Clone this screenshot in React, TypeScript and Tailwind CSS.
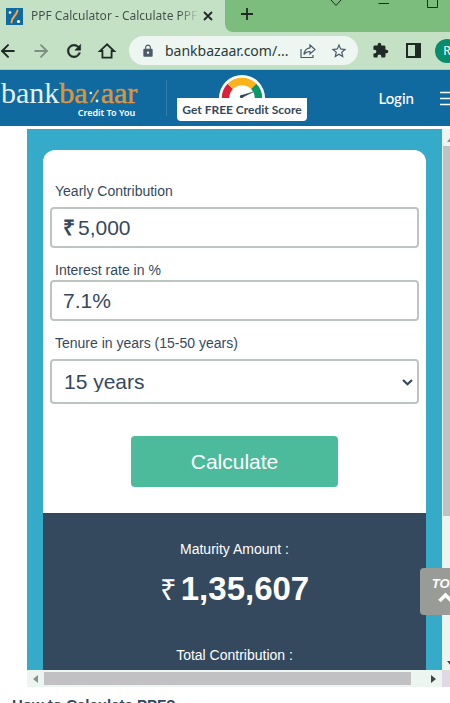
import React, { useState } from 'react';
import { MdLock, MdStarBorder } from 'react-icons/md';
import { ArrowLeft, ArrowRight } from 'lucide-react';

const TENURES = Array.from({ length: 36 }, (_, i) => i + 15);

function TabStrip() {
  return (
    <div className="flex h-8 bg-[#7cbc7c]">
      <div className="flex h-8 w-1/2 items-center bg-[#c5e1c5] pl-[6px] pr-3">
        <svg className="h-[17px] w-[17px] shrink-0" viewBox="0 0 17 17" aria-hidden="true">
          <rect width="17" height="17" fill="#0f6a9f" />
          <path d="M11.5 2.5 Q11 5 8.5 8 Q5.5 11.5 5.5 14.5" fill="none" stroke="#f3a24a" strokeWidth="2" strokeLinecap="round" />
          <circle cx="4" cy="4.5" r="1.3" fill="#fff" />
          <circle cx="12.5" cy="13.5" r="1.6" fill="#fff" />
        </svg>
        <span className="ml-2 min-w-0 flex-1 overflow-hidden whitespace-nowrap bg-gradient-to-r from-[#3f4f49] from-88% to-transparent bg-clip-text font-['Noto_Sans',sans-serif] text-[12px] leading-5 text-transparent">
          PPF Calculator - Calculate PPF
        </span>
        <button type="button" aria-label="Close tab" className="ml-1 shrink-0 text-[#1f2a24]">
          <svg className="h-[10px] w-[10px]" viewBox="0 0 10 10" stroke="currentColor" strokeWidth="1.8">
            <path d="M1 1 L9 9 M9 1 L1 9" />
          </svg>
        </button>
      </div>
      <div className="flex h-8 flex-1 items-start bg-[#c5e1c5]">
        <div className="flex h-8 flex-1 items-start rounded-bl-lg bg-[#7cbc7c] pl-4">
          <button type="button" aria-label="New tab" className="mt-2 text-[#1f2a24]">
            <svg className="h-3 w-3" viewBox="0 0 12 12" stroke="currentColor" strokeWidth="1.8">
              <path d="M6 0 V12 M0 6 H12" />
            </svg>
          </button>
          <div className="ml-auto flex items-start gap-9 pr-3 text-[#1f2a24]">
            <button type="button" aria-label="Search tabs">
              <svg className="h-[10px] w-3" viewBox="0 0 12 10" fill="none" stroke="currentColor">
                <path d="M1 0 L6 5.5 L11 0" />
              </svg>
            </button>
            <button type="button" aria-label="Minimize">
              <svg className="h-[10px] w-3" viewBox="0 0 12 10" fill="none" stroke="currentColor">
                <path d="M0.5 3.5 H11" />
              </svg>
            </button>
            <button type="button" aria-label="Maximize">
              <svg className="h-[10px] w-3" viewBox="0 0 12 10" fill="none" stroke="currentColor">
                <path d="M1.5 -2 V7.5 H11.5 V-2" />
              </svg>
            </button>
          </div>
        </div>
      </div>
    </div>
  );
}

function Toolbar() {
  return (
    <div className="flex items-center border-b border-[#b3cbb3] bg-[#c5e1c5] pb-1 pt-1 text-[#1f2a24]">
      <div className="flex shrink-0 items-center gap-[13px] pr-3">
        <button type="button" aria-label="Back" className="-ml-[2px]">
          <ArrowLeft className="h-5 w-5" strokeWidth={2.4} />
        </button>
        <button type="button" aria-label="Forward" className="text-[#7d8f82]">
          <ArrowRight className="h-5 w-5" strokeWidth={2.2} />
        </button>
        <button type="button" aria-label="Reload">
          <svg className="h-5 w-5" viewBox="0 0 24 24" fill="currentColor" stroke="currentColor" strokeWidth="0.6">
            <path d="M17.65 6.35A7.958 7.958 0 0 0 12 4c-4.42 0-7.99 3.58-7.99 8s3.57 8 7.99 8c3.73 0 6.84-2.55 7.73-6h-2.08A5.99 5.99 0 0 1 12 18c-3.31 0-6-2.69-6-6s2.69-6 6-6c1.66 0 3.14.69 4.22 1.78L13 11h7V4l-2.35 2.35z" />
          </svg>
        </button>
        <button type="button" aria-label="Home">
          <svg className="h-5 w-5" viewBox="0 0 24 24" fill="none" stroke="currentColor" strokeWidth="2.2">
            <path d="M12 4 L3.5 12 H6.5 V20 H17.5 V12 H20.500 Z" />
          </svg>
        </button>
      </div>
      <div className="flex h-[29px] min-w-0 flex-1 items-center rounded-full bg-[#edf6f1] pl-3 pr-[10px] text-[#4b5a68]">
        <MdLock className="h-[14px] w-[14px] shrink-0" />
        <input
          type="text"
          aria-label="Address"
          defaultValue="bankbazaar.com/..."
          className="ml-[10px] w-full min-w-0 bg-transparent font-['Noto_Sans',sans-serif] text-[14px] text-[#2c3a38] outline-none"
        />
        <button type="button" aria-label="Share" className="shrink-0">
          <svg className="h-4 w-4" viewBox="0 0 16 16" fill="none" stroke="currentColor" strokeWidth="1.2">
            <path d="M1 6 V14.5 H13 V12" />
            <path d="M10 2 L15 6.5 L10 11 V8.5 Q6 8.5 4 11.5 Q4.5 5.5 10 4.8 Z" />
          </svg>
        </button>
        <button type="button" aria-label="Bookmark" className="ml-[14px] shrink-0">
          <MdStarBorder className="h-[18px] w-[18px]" />
        </button>
      </div>
      <div className="-mr-[9px] ml-[14px] flex shrink-0 items-center">
        <button type="button" aria-label="Extensions">
          <svg className="h-[17px] w-[17px]" viewBox="0 0 24 24" fill="currentColor">
            <path d="M20.5 11H19V7a2 2 0 0 0-2-2h-4V3.5a2.5 2.5 0 0 0-5 0V5H4a2 2 0 0 0-2 2v3.8h1.5a2.7 2.7 0 0 1 0 5.4H2V20a2 2 0 0 0 2 2h3.8v-1.500a2.7 2.7 0 0 1 5.4 0V22H17a2 2 0 0 0 2-2v-4h1.500a2.500 2.500 0 0 0 0-5z" />
          </svg>
        </button>
        <button type="button" aria-label="Side panel" className="ml-[17px]">
          <svg className="h-[15px] w-[15px]" viewBox="0 0 15 15">
            <rect x="1" y="1" width="13" height="13" fill="none" stroke="currentColor" strokeWidth="2" />
            <rect x="9" y="1" width="5" height="13" fill="currentColor" />
          </svg>
        </button>
        <button
          type="button"
          aria-label="Profile"
          className="ml-[14px] h-6 w-6 rounded-full bg-[#078c6c] text-center font-['Noto_Sans',sans-serif] text-[12px] leading-6 text-white"
        >
          R
        </button>
      </div>
    </div>
  );
}

function SiteHeader() {
  return (
    <header className="flex h-14 items-center bg-[#106a9f] font-[Lato,sans-serif] text-white">
      <a href="#" className="flex shrink-0 flex-col pl-px pt-[2px]">
        <span className="flex items-baseline font-['Liberation_Serif',serif] text-[30px] leading-7">
          <span className="text-[#e4f0f7]">bank</span>
          <span className="text-[#dc9440] [-webkit-text-stroke:0.5px_#dc9440]">ba</span>
          <svg className="h-[14px] w-[13px]" viewBox="0 0 13 14" role="img" aria-label="z">
            <path d="M10.5 1 Q9 3 6.5 7 Q4 11 3 13.5" fill="none" stroke="#dc9440" strokeWidth="2" />
            <circle cx="2.8" cy="4" r="1.3" fill="#e4f0f7" />
            <circle cx="9" cy="12" r="1.4" fill="#e4f0f7" />
          </svg>
          <span className="text-[#dc9440] [-webkit-text-stroke:0.5px_#dc9440]">aar</span>
        </span>
        <span className="self-end pr-[2px] font-['Noto_Sans',sans-serif] text-[9px] font-semibold leading-3">Credit To You</span>
      </a>
      <div className="ml-[29px] h-9 w-px shrink-0 bg-[#3a7ca8]" />
      <a href="#" className="ml-[10px] flex shrink-0 flex-col items-center">
        <svg className="h-[23px] w-[46px]" viewBox="0 0 46 23" aria-hidden="true">
          <path d="M0 23 A23 23 0 0 1 46 23 Z" fill="#fff" />
          <path d="M6.5 23 A16.5 16.5 0 0 1 11.3 11.3" fill="none" stroke="#e01e37" strokeWidth="7.5" />
          <path d="M11.3 11.3 A16.5 16.5 0 0 1 34.7 11.3" fill="none" stroke="#fbb21b" strokeWidth="7.5" />
          <path d="M34.7 11.3 A16.5 16.5 0 0 1 39.5 23" fill="none" stroke="#0b9766" strokeWidth="7.5" />
          <path d="M22 20.5 L34 17 L23 22.5 Z" fill="#2f4358" stroke="#2f4358" strokeWidth="0.5" />
          <circle cx="22.5" cy="21.5" r="1.6" fill="#2f4358" />
        </svg>
        <span className="rounded-b bg-white px-[5px] text-[12px] font-bold leading-[23px] text-[#34495e]">
          Get FREE Credit Score
        </span>
      </a>
      <a href="#" className="ml-auto text-[15px] font-medium leading-5">Login</a>
      <button type="button" aria-label="Menu" className="-mr-[7px] ml-[26px] shrink-0">
        <svg className="h-[15px] w-[17px]" viewBox="0 0 17 15" stroke="#fff" strokeWidth="1.3">
          <path d="M0 1.5 H17 M0 7.5 H17 M0 13.5 H17" />
        </svg>
      </button>
    </header>
  );
}

function Calculator() {
  const [amount, setAmount] = useState('5,000');
  const [rate, setRate] = useState('7.1%');
  const [years, setYears] = useState(15);

  return (
    <div className="min-w-0 flex-1 bg-[#36aac9] px-4 pt-[21px] text-[14px] leading-5 text-[#34495e]">
      <form
        className="rounded-t-xl bg-white px-[7px] pb-[26px] pt-[31px]"
        onSubmit={e => e.preventDefault()}
      >
        <label htmlFor="amount" className="mb-[6px] block pl-[5px]">Yearly Contribution</label>
        <div className="flex h-[41px] items-center rounded border-2 border-[#bdc5c1] pl-[11px] text-[21px]">
          <span className="font-bold">₹</span>
          <input
            id="amount"
            type="text"
            value={amount}
            onChange={e => setAmount(e.target.value)}
            className="ml-[3px] w-full min-w-0 bg-transparent outline-none"
          />
        </div>

        <label htmlFor="rate" className="mt-3 block pl-[5px]">Interest rate in %</label>
        <input
          id="rate"
          type="text"
          value={rate}
          onChange={e => setRate(e.target.value)}
          className="block h-[41px] w-full rounded border-2 border-[#bdc5c1] pl-[11px] text-[21px] outline-none"
        />

        <label htmlFor="years" className="mb-[6px] mt-3 block pl-[5px]">Tenure in years (15-50 years)</label>
        <div className="relative">
          <select
            id="years"
            value={years}
            onChange={e => setYears(Number(e.target.value))}
            className="block h-[45px] w-full appearance-none rounded border-2 border-[#bdc5c1] bg-white pl-3 text-[21px] outline-none"
          >
            {TENURES.map(n => (
              <option key={n} value={n}>{n} years</option>
            ))}
          </select>
          <svg className="pointer-events-none absolute right-[6px] top-5 h-[7px] w-[11px]" viewBox="0 0 11 7" fill="none" stroke="#34495e" strokeWidth="2.2">
            <path d="M1 1 L5.5 5.3 L10 1" />
          </svg>
        </div>

        <button
          type="submit"
          className="mx-auto mt-8 block h-[51px] w-[56%] rounded bg-[#4bbb9b] text-[21px] text-white"
        >
          Calculate
        </button>
      </form>

      <div className="bg-[#34495e] pb-[5px] pt-[26px] text-center text-white">
        <p>Maturity Amount :</p>
        <p className="mt-[10px] text-[33px] font-bold leading-10">
          <span className="mr-1 text-[29px] font-normal">₹</span>1,35,607
        </p>
        <p className="mt-[35px]">Total Contribution :</p>
      </div>
    </div>
  );
}

function VerticalScrollbar() {
  return (
    <div className="-mr-[9px] flex w-[17px] shrink-0 flex-col items-center bg-[#edf5f0] pb-1 pt-2">
      <svg className="h-[5px] w-2" viewBox="0 0 8 5" fill="#8b918d"><path d="M0 5 L4 0 L8 5 Z" /></svg>
      <div className="mb-auto mt-1 h-[70%] w-[15px] bg-[#c1c1c3]" />
      <svg className="h-[5px] w-2" viewBox="0 0 8 5" fill="#3f4643"><path d="M0 0 L4 5 L8 0 Z" /></svg>
    </div>
  );
}

function HorizontalScrollbar() {
  return (
    <div className="flex h-[17px] bg-[#dddbe1]">
      <div className="flex min-w-0 flex-1 items-center bg-[#edf5f0] px-[6px]">
        <svg className="h-2 w-[5px] shrink-0" viewBox="0 0 5 8" fill="#8b918d"><path d="M5 0 L0 4 L5 8 Z" /></svg>
        <div className="ml-[6px] mr-5 h-[13px] flex-1 bg-[#c1c1c3]" />
        <svg className="h-2 w-[5px] shrink-0" viewBox="0 0 5 8" fill="#3f4643"><path d="M0 0 L5 4 L0 8 Z" /></svg>
      </div>
      <div className="w-2 shrink-0" />
    </div>
  );
}

export default function App() {
  return (
    <div className="relative h-screen overflow-hidden bg-white font-['Liberation_Sans',Arial,sans-serif]">
      <TabStrip />
      <Toolbar />
      <SiteHeader />

      <main className="pt-[3px]">
        <div className="ml-[27px]">
          <div className="flex">
            <Calculator />
            <VerticalScrollbar />
          </div>
          <HorizontalScrollbar />
        </div>
        <h2 className="mt-2 pl-3 text-[15px] font-bold leading-5 text-[#34495e]">How to Calculate PPF?</h2>
      </main>

      {/* Back to top */}
      <a
        href="#"
        className="absolute -right-5 bottom-[88px] flex h-[47px] w-[50px] flex-col items-center rounded bg-[#999b96] pt-2 text-[13px] font-bold italic leading-4 text-white"
      >
        TOP
        <svg className="h-[11px] w-[15px]" viewBox="0 0 15 11" fill="none" stroke="#fff" strokeWidth="3.5">
          <path d="M1.5 9 L7.5 3 L13.5 9" />
        </svg>
      </a>
    </div>
  );
}
